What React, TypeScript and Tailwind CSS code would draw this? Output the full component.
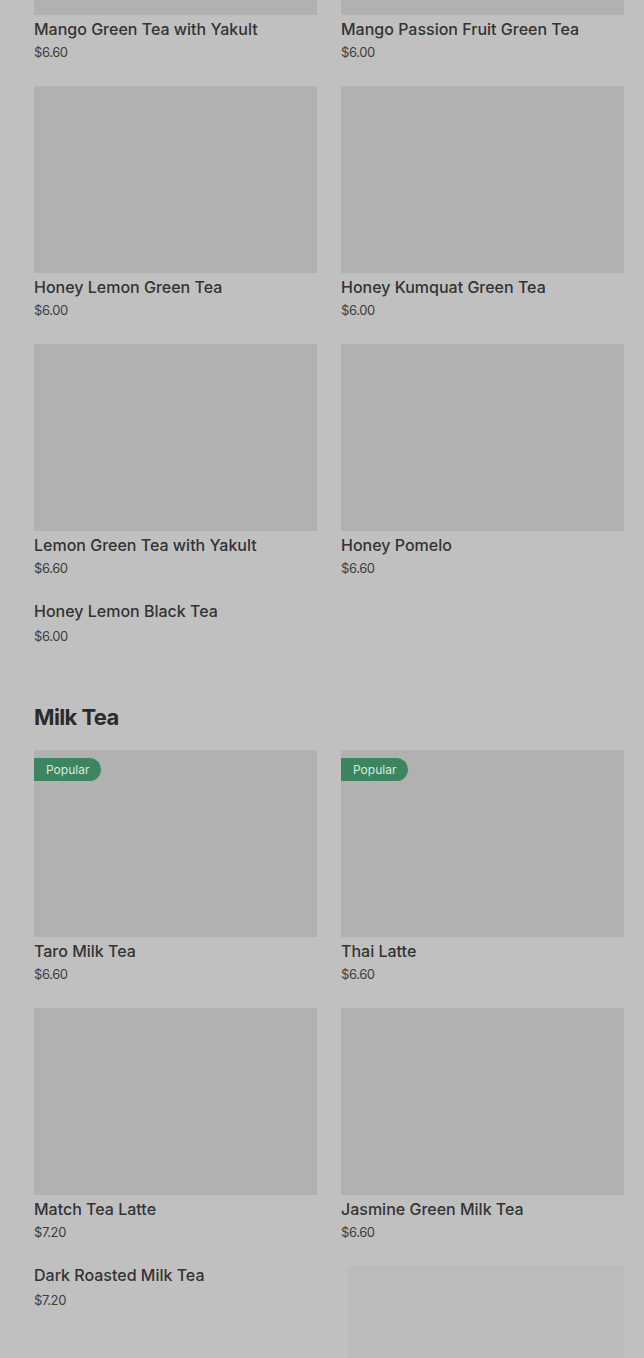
import React from "react";

type Item = { name: string; price: string; popular?: boolean };

function Card({ item, imgH = "h-[187px]" }: { item: Item; imgH?: string }) {
  return (
    <div className="flex flex-col">
      <div className={`relative ${imgH} w-full bg-[#b1b1b1]`}>
        {item.popular && (
          <span className="absolute left-0 top-[8px] flex h-[23px] items-center rounded-r-full bg-[#3c8560] pl-[12px] pr-[12px] text-[12px] text-[#d7eadf]">
            Popular
          </span>
        )}
      </div>
      <div className="mt-[2px] text-[16px] leading-[24px] font-medium text-[#333333]">{item.name}</div>
      <div className="mt-[1px] text-[13px] leading-[20px] tracking-[-0.4px] text-[#3d3d3d]">{item.price}</div>
    </div>
  );
}

export default function App() {
  return (
    <div
      className="relative h-[1358px] w-[644px] overflow-hidden bg-[#c0c0c0]"
      style={{ fontFamily: "Inter, 'Noto Sans', sans-serif" }}
    >
      <div className="pl-[34px] pr-[20px]">
        <div className="grid grid-cols-2 gap-x-[24px] gap-y-[24px]">
          <Card item={{ name: "Mango Green Tea with Yakult", price: "$6.60" }} imgH="h-[15px]" />
          <Card item={{ name: "Mango Passion Fruit Green Tea", price: "$6.00" }} imgH="h-[15px]" />
          <Card item={{ name: "Honey Lemon Green Tea", price: "$6.00" }} />
          <Card item={{ name: "Honey Kumquat Green Tea", price: "$6.00" }} />
          <Card item={{ name: "Lemon Green Tea with Yakult", price: "$6.60" }} />
          <Card item={{ name: "Honey Pomelo", price: "$6.60" }} />
        </div>
        <div className="mt-[21px] flex flex-col">
          <div className="text-[16px] leading-[24px] font-medium text-[#333333]">Honey Lemon Black Tea</div>
          <div className="mt-[3px] text-[13px] leading-[20px] tracking-[-0.4px] text-[#3d3d3d]">$6.00</div>
        </div>
        <h2 className="mt-[55px] text-[22px] leading-[32px] font-bold tracking-[-0.6px] text-[#2b2b2b]">Milk Tea</h2>
        <div className="mt-[17px] grid grid-cols-2 gap-x-[24px] gap-y-[24px]">
          <Card item={{ name: "Taro Milk Tea", price: "$6.60", popular: true }} />
          <Card item={{ name: "Thai Latte", price: "$6.60", popular: true }} />
          <Card item={{ name: "Match Tea Latte", price: "$7.20" }} />
          <Card item={{ name: "Jasmine Green Milk Tea", price: "$6.60" }} />
        </div>
        <div className="mt-[21px] grid grid-cols-2 gap-x-[24px]">
          <div className="flex flex-col">
            <div className="text-[16px] leading-[24px] font-medium text-[#333333]">Dark Roasted Milk Tea</div>
            <div className="mt-[3px] text-[13px] leading-[20px] tracking-[-0.4px] text-[#3d3d3d]">$7.20</div>
          </div>
          <div className="ml-[7px] mt-[3px] h-[120px] bg-[#bbbbbb]" />
        </div>
      </div>
    </div>
  );
}
